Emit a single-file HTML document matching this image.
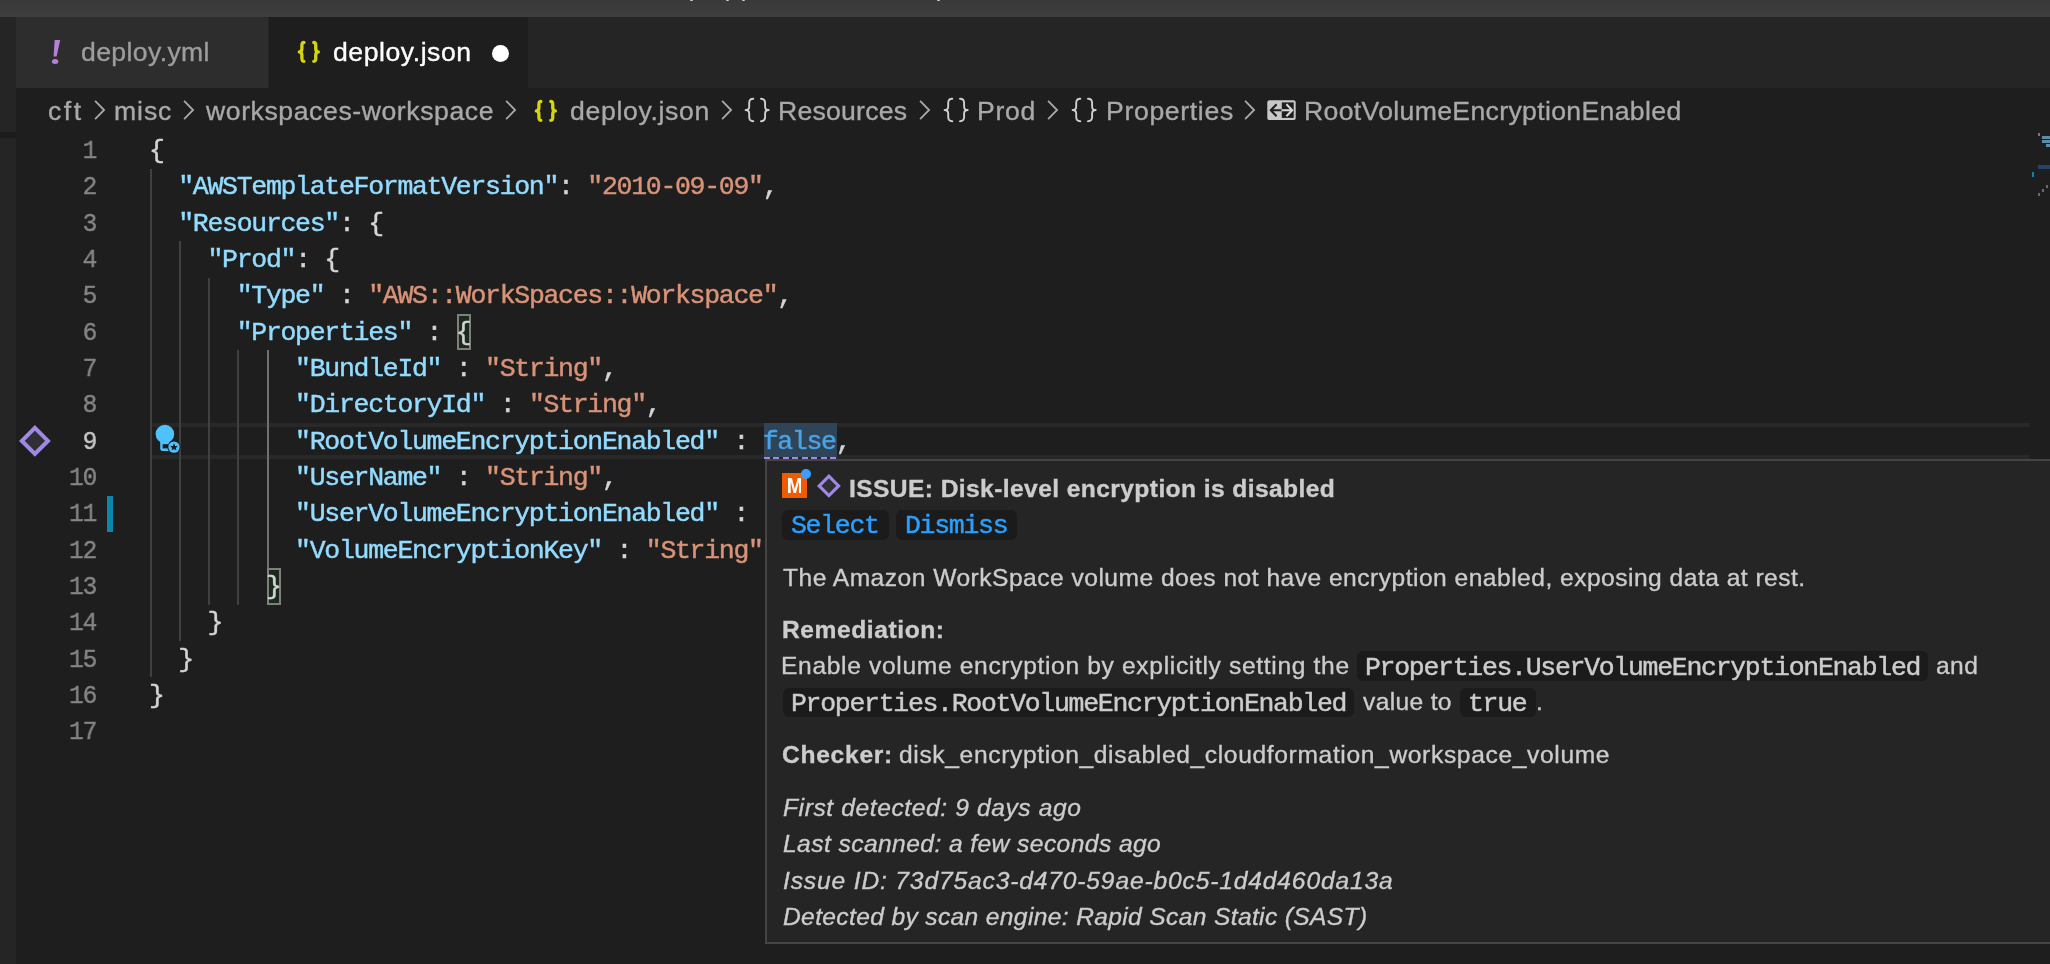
<!DOCTYPE html>
<html><head><meta charset="utf-8"><title>deploy.json</title>
<style>
html,body{margin:0;padding:0}
body{width:2050px;height:964px;overflow:hidden;background:#1e1e1e;position:relative;font-family:"Liberation Sans",sans-serif;color:#ccc}
.abs{position:absolute}
#title{left:0;top:0;width:2050px;height:17px;background:linear-gradient(#393939,#3e3e3e)}
#side{left:0;top:17px;width:16px;height:947px;background:#252526}
#side i{position:absolute;left:0;top:115px;width:16px;height:6px;background:#1c1c1c}
#tabs{left:16px;top:17px;width:2034px;height:71px;background:#252526}
.tab{position:absolute;top:0;height:71px}
#t1{left:0;width:252px;background:#2d2d2d}
#t2{left:253px;width:259px;background:#1e1e1e}
.t,.cl,.ln,.hc{will-change:transform}
.t{position:absolute;white-space:pre;line-height:36px;height:36px}
.ln{position:absolute;left:38.9px;width:57px;text-align:right;transform:scaleX(.92);transform-origin:100% 50%;letter-spacing:-1.293px;font-family:"Liberation Mono",monospace;font-size:26.5px;line-height:36.33px;height:36.33px;color:#858585;white-space:pre}
.cl{position:absolute;left:149.0px;letter-spacing:-1.293px;font-family:"Liberation Mono",monospace;font-size:26.5px;line-height:36.33px;height:36.33px;color:#d4d4d4;white-space:pre}
.k{color:#93dcff}.s{color:#d99378}.f{color:#4aa3e4}
.cl,.ln,.hc{-webkit-text-stroke:0.45px currentColor}
.t{-webkit-text-stroke:0.35px currentColor}
.g{position:absolute;width:2px;background:#404040}
.ga{background:#707070}
.r{position:absolute}
#hover{left:764.6px;top:459.1px;width:1300px;height:481.4px;background:#252526;border:2px solid #454545}
.cb{position:absolute;height:30px;background:#1b1b1c;border-radius:6px}
.hc{position:absolute;white-space:pre;letter-spacing:-1.293px;font-family:"Liberation Mono",monospace;font-size:26.5px;line-height:36px;height:36px;color:#ccc}
.lk{color:#2a9fff}
</style></head><body>

<div id="title" class="abs"></div>
<div id="side" class="abs"><i></i></div>
<div class="r" style="left:690.2px;top:0;width:3px;height:1.4px;background:#cfcfcf;border-radius:0 0 1px 1px"></div>
<div class="r" style="left:725.6px;top:0;width:3px;height:1.4px;background:#cfcfcf;border-radius:0 0 1px 1px"></div>
<div class="r" style="left:741.6px;top:0;width:3px;height:1.4px;background:#cfcfcf;border-radius:0 0 1px 1px"></div>
<div class="r" style="left:937.4px;top:0;width:3px;height:1.4px;background:#cfcfcf;border-radius:0 0 1px 1px"></div>
<div id="tabs" class="abs"><div id="t1" class="tab"></div><div id="t2" class="tab"></div></div>
<svg class="abs" style="left:48px;top:38px" width="16" height="28" viewBox="0 0 16 28"><path d="M6.6 2 L12.2 2 L8.6 18.5 L5.6 18.5 Z" fill="#b680da"/><ellipse cx="7.1" cy="23.4" rx="3.2" ry="2.5" fill="#b680da"/></svg>
<div class="t" style="left:81.00px;top:34.48px;font-size:26.6px;letter-spacing:0.374px;color:#9d9d9d">deploy.yml</div>
<div class="t" style="left:333.40px;top:34.48px;font-size:26.6px;letter-spacing:0.552px;color:#fff">deploy.json</div>
<div class="abs" style="left:491.5px;top:45px;width:17px;height:17px;border-radius:50%;background:#fff"></div>
<svg class="abs" style="left:296.96px;top:39.90px" width="24" height="24" viewBox="0 0 24 24"><path d="M6.9 2.5 C4.9 2.5 4.9 3.8 4.9 5.5 L4.9 8.6 C4.9 10.6 4 11.9 2.3 11.9 C4 11.9 4.9 13.2 4.9 15.2 L4.9 18.3 C4.9 20 4.9 21.3 6.9 21.3" fill="none" stroke="#d6d610" stroke-width="3.3" stroke-linecap="round" stroke-linejoin="round"/><path d="M16.76 2.5 C18.76 2.5 18.76 3.8 18.76 5.5 L18.76 8.6 C18.76 10.6 19.66 11.9 21.36 11.9 C19.66 11.9 18.76 13.2 18.76 15.2 L18.76 18.3 C18.76 20 18.76 21.3 16.76 21.3" fill="none" stroke="#d6d610" stroke-width="3.3" stroke-linecap="round" stroke-linejoin="round"/></svg>
<div class="t" style="left:48.00px;top:92.78px;font-size:26.6px;letter-spacing:2.507px;color:#a9a9a9">cft</div>
<div class="t" style="left:114.40px;top:92.78px;font-size:26.6px;letter-spacing:0.914px;color:#a9a9a9">misc</div>
<div class="t" style="left:206.00px;top:92.78px;font-size:26.6px;letter-spacing:0.585px;color:#a9a9a9">workspaces-workspace</div>
<div class="t" style="left:569.50px;top:92.78px;font-size:26.6px;letter-spacing:0.672px;color:#a9a9a9">deploy.json</div>
<div class="t" style="left:778.30px;top:92.78px;font-size:26.6px;letter-spacing:0.236px;color:#a9a9a9">Resources</div>
<div class="t" style="left:977.40px;top:92.78px;font-size:26.6px;letter-spacing:0.739px;color:#a9a9a9">Prod</div>
<div class="t" style="left:1105.60px;top:92.78px;font-size:26.6px;letter-spacing:0.666px;color:#a9a9a9">Properties</div>
<div class="t" style="left:1303.80px;top:92.78px;font-size:26.6px;letter-spacing:0.349px;color:#a9a9a9">RootVolumeEncryptionEnabled</div>
<svg class="abs" style="left:93.6px;top:99px" width="13" height="22" viewBox="0 0 13 22"><path d="M1.1 1.8 L10.1 11 L1.1 20.2" fill="none" stroke="#a9a9a9" stroke-width="1.8"/></svg>
<svg class="abs" style="left:183px;top:99px" width="13" height="22" viewBox="0 0 13 22"><path d="M1.1 1.8 L10.1 11 L1.1 20.2" fill="none" stroke="#a9a9a9" stroke-width="1.8"/></svg>
<svg class="abs" style="left:504.8px;top:99px" width="13" height="22" viewBox="0 0 13 22"><path d="M1.1 1.8 L10.1 11 L1.1 20.2" fill="none" stroke="#a9a9a9" stroke-width="1.8"/></svg>
<svg class="abs" style="left:720.8px;top:99px" width="13" height="22" viewBox="0 0 13 22"><path d="M1.1 1.8 L10.1 11 L1.1 20.2" fill="none" stroke="#a9a9a9" stroke-width="1.8"/></svg>
<svg class="abs" style="left:918.6px;top:99px" width="13" height="22" viewBox="0 0 13 22"><path d="M1.1 1.8 L10.1 11 L1.1 20.2" fill="none" stroke="#a9a9a9" stroke-width="1.8"/></svg>
<svg class="abs" style="left:1046.6px;top:99px" width="13" height="22" viewBox="0 0 13 22"><path d="M1.1 1.8 L10.1 11 L1.1 20.2" fill="none" stroke="#a9a9a9" stroke-width="1.8"/></svg>
<svg class="abs" style="left:1244.2px;top:99px" width="13" height="22" viewBox="0 0 13 22"><path d="M1.1 1.8 L10.1 11 L1.1 20.2" fill="none" stroke="#a9a9a9" stroke-width="1.8"/></svg>
<svg class="abs" style="left:533.90px;top:98.60px" width="24" height="24" viewBox="0 0 24 24"><path d="M6.9 2.5 C4.9 2.5 4.9 3.8 4.9 5.5 L4.9 8.6 C4.9 10.6 4 11.9 2.3 11.9 C4 11.9 4.9 13.2 4.9 15.2 L4.9 18.3 C4.9 20 4.9 21.3 6.9 21.3" fill="none" stroke="#d6d610" stroke-width="3.3" stroke-linecap="round" stroke-linejoin="round"/><path d="M16.76 2.5 C18.76 2.5 18.76 3.8 18.76 5.5 L18.76 8.6 C18.76 10.6 19.66 11.9 21.36 11.9 C19.66 11.9 18.76 13.2 18.76 15.2 L18.76 18.3 C18.76 20 18.76 21.3 16.76 21.3" fill="none" stroke="#d6d610" stroke-width="3.3" stroke-linecap="round" stroke-linejoin="round"/></svg>
<svg class="abs" style="left:744.00px;top:97.00px" width="27" height="27" viewBox="0 0 27 27"><path d="M9.3 1.8 C6 1.8 5.2 3.4 5.2 6 L5.2 9.5 C5.2 11.8 4 13.05 1.6 13.05 C4 13.05 5.2 14.3 5.2 16.6 L5.2 20.1 C5.2 22.7 6 24.3 9.3 24.3" fill="none" stroke="#cfcfcf" stroke-width="1.9" stroke-linecap="round" stroke-linejoin="round"/><path d="M17.0 1.8 C20.3 1.8 21.1 3.4 21.1 6 L21.1 9.5 C21.1 11.8 22.3 13.05 24.7 13.05 C22.3 13.05 21.1 14.3 21.1 16.6 L21.1 20.1 C21.1 22.7 20.3 24.3 17.0 24.3" fill="none" stroke="#cfcfcf" stroke-width="1.9" stroke-linecap="round" stroke-linejoin="round"/></svg>
<svg class="abs" style="left:942.50px;top:97.00px" width="27" height="27" viewBox="0 0 27 27"><path d="M9.3 1.8 C6 1.8 5.2 3.4 5.2 6 L5.2 9.5 C5.2 11.8 4 13.05 1.6 13.05 C4 13.05 5.2 14.3 5.2 16.6 L5.2 20.1 C5.2 22.7 6 24.3 9.3 24.3" fill="none" stroke="#cfcfcf" stroke-width="1.9" stroke-linecap="round" stroke-linejoin="round"/><path d="M17.0 1.8 C20.3 1.8 21.1 3.4 21.1 6 L21.1 9.5 C21.1 11.8 22.3 13.05 24.7 13.05 C22.3 13.05 21.1 14.3 21.1 16.6 L21.1 20.1 C21.1 22.7 20.3 24.3 17.0 24.3" fill="none" stroke="#cfcfcf" stroke-width="1.9" stroke-linecap="round" stroke-linejoin="round"/></svg>
<svg class="abs" style="left:1071.20px;top:97.00px" width="27" height="27" viewBox="0 0 27 27"><path d="M9.3 1.8 C6 1.8 5.2 3.4 5.2 6 L5.2 9.5 C5.2 11.8 4 13.05 1.6 13.05 C4 13.05 5.2 14.3 5.2 16.6 L5.2 20.1 C5.2 22.7 6 24.3 9.3 24.3" fill="none" stroke="#cfcfcf" stroke-width="1.9" stroke-linecap="round" stroke-linejoin="round"/><path d="M17.0 1.8 C20.3 1.8 21.1 3.4 21.1 6 L21.1 9.5 C21.1 11.8 22.3 13.05 24.7 13.05 C22.3 13.05 21.1 14.3 21.1 16.6 L21.1 20.1 C21.1 22.7 20.3 24.3 17.0 24.3" fill="none" stroke="#cfcfcf" stroke-width="1.9" stroke-linecap="round" stroke-linejoin="round"/></svg>
<svg class="abs" style="left:1267px;top:99.8px" width="29" height="21" viewBox="0 0 29 21"><rect x="0.3" y="0.3" width="28.4" height="19.8" rx="2.2" fill="#c8c8c8"/><rect x="14.8" y="2.4" width="11.9" height="15.5" fill="#1e1e1e"/><path d="M9.6 4.2 L3.8 10.2 L9.6 16.2 M3.8 10.2 L14.6 10.2" fill="none" stroke="#1e1e1e" stroke-width="2.1"/><path d="M19.4 4.2 L25.2 10.2 L19.4 16.2 M25.2 10.2 L14.6 10.2" fill="none" stroke="#d8d8d8" stroke-width="2.1"/></svg>
<div class="r" style="left:150px;top:423.2px;width:1880px;height:3.4px;background:#282828"></div>
<div class="r" style="left:150px;top:455.2px;width:1880px;height:3.8px;background:#282828"></div>
<div class="g" style="left:149.8px;top:168.63px;height:508.62px"></div>
<div class="g" style="left:178.6px;top:241.29px;height:399.63px"></div>
<div class="g" style="left:207.9px;top:277.62px;height:326.97px"></div>
<div class="g" style="left:237.1px;top:350.28px;height:254.31px"></div>
<div class="g ga" style="left:266.6px;top:350.28px;height:217.98px"></div>
<div class="r" style="left:457.11px;top:313.65px;width:10.01px;height:32.73px;border:2px solid #7f7f7f;background:#1a2a1b"></div>
<div class="r" style="left:267.18px;top:567.96px;width:10.01px;height:32.73px;border:2px solid #7f7f7f;background:#1a2a1b"></div>
<div class="r" style="left:764.3px;top:423.2px;width:72.8px;height:33.4px;background:#2f4457"></div>
<div class="ln" style="top:133.00px;color:#858585">1</div>
<div class="cl" style="top:133.00px">{</div>
<div class="ln" style="top:169.33px;color:#858585">2</div>
<div class="cl" style="top:169.33px">  <span class="k">"AWSTemplateFormatVersion"</span>: <span class="s">"2010-09-09"</span>,</div>
<div class="ln" style="top:205.66px;color:#858585">3</div>
<div class="cl" style="top:205.66px">  <span class="k">"Resources"</span>: {</div>
<div class="ln" style="top:241.99px;color:#858585">4</div>
<div class="cl" style="top:241.99px">    <span class="k">"Prod"</span>: {</div>
<div class="ln" style="top:278.32px;color:#858585">5</div>
<div class="cl" style="top:278.32px">      <span class="k">"Type"</span> : <span class="s">"AWS::WorkSpaces::Workspace"</span>,</div>
<div class="ln" style="top:314.65px;color:#858585">6</div>
<div class="cl" style="top:314.65px">      <span class="k">"Properties"</span> : {</div>
<div class="ln" style="top:350.98px;color:#858585">7</div>
<div class="cl" style="top:350.98px">          <span class="k">"BundleId"</span> : <span class="s">"String"</span>,</div>
<div class="ln" style="top:387.31px;color:#858585">8</div>
<div class="cl" style="top:387.31px">          <span class="k">"DirectoryId"</span> : <span class="s">"String"</span>,</div>
<div class="ln" style="top:423.64px;color:#c6c6c6">9</div>
<div class="cl" style="top:423.64px">          <span class="k">"RootVolumeEncryptionEnabled"</span> : <span class="f">false</span>,</div>
<div class="ln" style="top:459.97px;color:#858585">10</div>
<div class="cl" style="top:459.97px">          <span class="k">"UserName"</span> : <span class="s">"String"</span>,</div>
<div class="ln" style="top:496.30px;color:#858585">11</div>
<div class="cl" style="top:496.30px">          <span class="k">"UserVolumeEncryptionEnabled"</span> : </div>
<div class="ln" style="top:532.63px;color:#858585">12</div>
<div class="cl" style="top:532.63px">          <span class="k">"VolumeEncryptionKey"</span> : <span class="s">"String"</span></div>
<div class="ln" style="top:568.96px;color:#858585">13</div>
<div class="cl" style="top:568.96px">        }</div>
<div class="ln" style="top:605.29px;color:#858585">14</div>
<div class="cl" style="top:605.29px">    }</div>
<div class="ln" style="top:641.62px;color:#858585">15</div>
<div class="cl" style="top:641.62px">  }</div>
<div class="ln" style="top:677.95px;color:#858585">16</div>
<div class="cl" style="top:677.95px">}</div>
<div class="ln" style="top:714.28px;color:#858585">17</div>
<div class="cl" style="top:714.28px"></div>
<div class="r" style="left:764.3px;top:457px;width:72.8px;height:2.4px;background:repeating-linear-gradient(90deg,#a088e6 0 5.8px,transparent 5.8px 9.45px)"></div>
<svg class="abs" style="left:17.50px;top:424.40px" width="33.80" height="33.80"><path d="M16.90 3.90 L29.90 16.90 L16.90 29.90 L3.90 16.90 Z" fill="#2f3033" stroke="#a088e6" stroke-width="4.10" stroke-linejoin="miter"/></svg>
<svg class="abs" style="left:153px;top:423px" width="30" height="32" viewBox="0 0 30 32"><circle cx="11.9" cy="11" r="9.3" fill="#4fc1ff"/><path d="M7.2 17 L7.2 25.2 Q7.2 28 10 28 L16.6 28 L16.6 17 Z" fill="#4fc1ff"/><rect x="9.6" y="21.2" width="6" height="4.2" fill="#1e1e1e"/><circle cx="21" cy="24.1" r="6.6" fill="#1e1e1e"/><circle cx="21" cy="24.1" r="5.7" fill="#4fc1ff"/><path d="M21 20.3 L22.1 22.9 L24.9 23.1 L22.8 24.9 L23.4 27.6 L21 26.1 L18.6 27.6 L19.2 24.9 L17.1 23.1 L19.9 22.9 Z" fill="#1e1e1e"/></svg>
<div class="r" style="left:2038px;top:164.6px;width:12px;height:4.2px;background:#264566"></div>
<div class="r" style="left:2031.8px;top:172.2px;width:2.2px;height:4.6px;background:#0b87a9"></div>
<div class="r" style="left:2038px;top:132.6px;width:2px;height:3px;background:#7a7a7a"></div>
<div class="r" style="left:2042px;top:136.4px;width:8px;height:2.6px;background:#5d8da6"></div>
<div class="r" style="left:2042px;top:140.4px;width:8px;height:2.6px;background:#5d8da6"></div>
<div class="r" style="left:2046px;top:144.4px;width:4px;height:2.6px;background:#5d8da6"></div>
<div class="r" style="left:2046px;top:184.6px;width:2px;height:3px;background:#6a6a6a"></div>
<div class="r" style="left:2042px;top:188.6px;width:2px;height:3px;background:#6a6a6a"></div>
<div class="r" style="left:2038px;top:192.6px;width:2px;height:3px;background:#6a6a6a"></div>
<div class="r" style="left:107px;top:495.5px;width:6.2px;height:36.5px;background:#0b87a9"></div>
<div id="hover" class="abs"></div>
<div class="r" style="left:782.1px;top:473px;width:24.8px;height:24.8px;background:#f05a00"></div>
<svg class="abs" style="left:787.7px;top:477.7px" width="13.6" height="15.5" viewBox="0 0 13.6 15.5"><path d="M0 15.5 L0 0 L3.9 0 L6.8 11 L9.7 0 L13.6 0 L13.6 15.5 L10.9 15.5 L10.9 3.6 L7.9 15.5 L5.7 15.5 L2.7 3.6 L2.7 15.5 Z" fill="#fff"/></svg>
<div class="r" style="left:800.7px;top:469.2px;width:10.2px;height:10.2px;border-radius:50%;background:#3b9eff"></div>
<svg class="abs" style="left:816.10px;top:472.80px" width="25.80" height="25.80"><path d="M12.90 3.19 L22.61 12.90 L12.90 22.61 L3.19 12.90 Z" fill="#2f3033" stroke="#a088e6" stroke-width="3.10" stroke-linejoin="miter"/></svg>
<div class="t" style="left:848.60px;top:470.98px;font-size:24.6px;letter-spacing:0.402px;color:#cccccc;font-weight:bold">ISSUE: Disk-level encryption is disabled</div>
<div class="cb" style="left:782.3px;top:509.8px;width:107.1px;height:29.8px"></div>
<div class="cb" style="left:895.9px;top:509.8px;width:120.8px;height:29.8px"></div>
<div class="hc " style="left:791.40px;top:508.34px;color:#2a9fff">Select</div>
<div class="hc " style="left:904.60px;top:508.34px;color:#2a9fff">Dismiss</div>
<div class="t" style="left:783.30px;top:559.78px;font-size:24.6px;letter-spacing:0.478px;color:#cccccc">The Amazon WorkSpace volume does not have encryption enabled, exposing data at rest.</div>
<div class="t" style="left:782.30px;top:612.08px;font-size:24.6px;letter-spacing:0.565px;color:#cccccc;font-weight:bold">Remediation:</div>
<div class="t" style="left:781.30px;top:648.18px;font-size:24.6px;letter-spacing:0.657px;color:#cccccc">Enable volume encryption by explicitly setting the</div>
<div class="cb" style="left:1356.7px;top:651.2px;width:571.8px;height:29.8px"></div>
<div class="hc " style="left:1365.10px;top:649.94px;color:#cccccc">Properties.UserVolumeEncryptionEnabled</div>
<div class="t" style="left:1935.60px;top:648.18px;font-size:24.6px;letter-spacing:0.422px;color:#cccccc">and</div>
<div class="cb" style="left:782.5px;top:687.6px;width:571.8px;height:29.8px"></div>
<div class="hc " style="left:790.90px;top:686.34px;color:#cccccc">Properties.RootVolumeEncryptionEnabled</div>
<div class="t" style="left:1362.90px;top:684.48px;font-size:24.6px;letter-spacing:0.334px;color:#cccccc">value to</div>
<div class="cb" style="left:1459.9px;top:687.6px;width:76.1px;height:29.8px"></div>
<div class="hc " style="left:1468.30px;top:686.34px;color:#cccccc">true</div>
<div class="t" style="left:1536.40px;top:684.48px;font-size:24.6px;letter-spacing:0.000px;color:#cccccc">.</div>
<div class="t" style="left:782.30px;top:736.98px;font-size:24.6px;letter-spacing:0.719px;color:#cccccc;font-weight:bold">Checker:</div>
<div class="t" style="left:898.80px;top:736.98px;font-size:24.6px;letter-spacing:0.639px;color:#cccccc">disk_encryption_disabled_cloudformation_workspace_volume</div>
<div class="t" style="left:782.90px;top:789.98px;font-size:24.6px;letter-spacing:0.596px;color:#cccccc;font-style:italic">First detected: 9 days ago</div>
<div class="t" style="left:782.90px;top:826.18px;font-size:24.6px;letter-spacing:0.424px;color:#cccccc;font-style:italic">Last scanned: a few seconds ago</div>
<div class="t" style="left:782.90px;top:862.68px;font-size:24.6px;letter-spacing:0.847px;color:#cccccc;font-style:italic">Issue ID: 73d75ac3-d470-59ae-b0c5-1d4d460da13a</div>
<div class="t" style="left:782.90px;top:899.08px;font-size:24.6px;letter-spacing:0.350px;color:#cccccc;font-style:italic">Detected by scan engine: Rapid Scan Static (SAST)</div>
</body></html>
